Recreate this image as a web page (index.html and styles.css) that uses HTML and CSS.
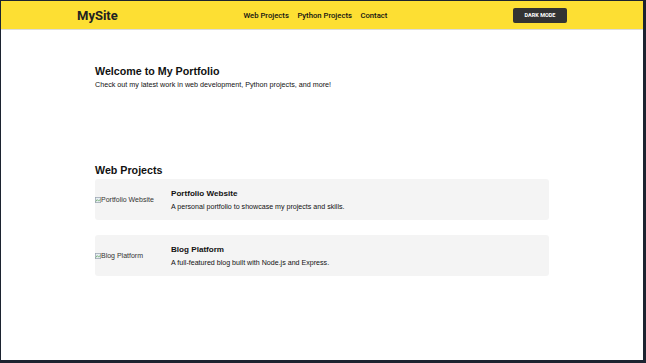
FILE: index.html
```html
<!DOCTYPE html>
<html>
<head>
    <meta charset="utf-8">
    <title>MySite</title>
    <link rel="stylesheet" href="styles.css">
</head>
<body>
<header class="site-header">
    <div class="logo">MySite</div>
    <nav class="nav">
        <a href="#web">Web Projects</a>
        <a href="#python">Python Projects</a>
        <a href="#contact">Contact</a>
    </nav>
    <button class="mode-btn">DARK MODE</button>
</header>
<main class="content">
    <section class="hero">
        <h1>Welcome to My Portfolio</h1>
        <p>Check out my latest work in web development, Python projects, and more!</p>
    </section>
    <section class="projects" id="web">
        <h2>Web Projects</h2>
        <div class="card">
            <span class="thumb"><svg class="broken" viewBox="0 0 8 8"><rect x="0.5" y="0.5" width="7" height="7" fill="#e8eef4" stroke="#9aa5b1" stroke-width="1"/><path d="M1 6 L3 3.5 L5 5.5 L7 3" fill="none" stroke="#5fa35a" stroke-width="1"/></svg>Portfolio Website</span>
            <div class="card-body">
                <h3>Portfolio Website</h3>
                <p>A personal portfolio to showcase my projects and skills.</p>
            </div>
        </div>
        <div class="card">
            <span class="thumb"><svg class="broken" viewBox="0 0 8 8"><rect x="0.5" y="0.5" width="7" height="7" fill="#e8eef4" stroke="#9aa5b1" stroke-width="1"/><path d="M1 6 L3 3.5 L5 5.5 L7 3" fill="none" stroke="#5fa35a" stroke-width="1"/></svg>Blog Platform</span>
            <div class="card-body">
                <h3>Blog Platform</h3>
                <p>A full-featured blog built with Node.js and Express.</p>
            </div>
        </div>
    </section>
</main>
</body>
</html>
```

FILE: styles.css
```css
html {
    background: #1c2330;
}
body {
    margin: 1px 3px 3px 1px;
    min-height: calc(100vh - 4px);
    background: #ffffff;
    font-family: "Liberation Sans", Arial, sans-serif;
    color: #111111;
}
.site-header {
    height: 28px;
    padding: 0 76px;
    display: flex;
    align-items: center;
    justify-content: space-between;
    background: #fddf33;
    border-bottom: 1px solid #dcdcdc;
    font-family: Roboto, "Liberation Sans", sans-serif;
}
.logo {
    font-size: 13px;
    font-weight: bold;
    color: #222222;
}
.nav {
    display: flex;
    gap: 8.5px;
}
.nav a {
    font-size: 7.7px;
    font-weight: 500;
    color: #111111;
    text-decoration: none;
}
.mode-btn {
    width: 54px;
    height: 15px;
    padding: 0;
    border: 0;
    border-radius: 2px;
    background: #333333;
    color: #ffffff;
    font-family: Roboto, "Liberation Sans", sans-serif;
    font-size: 5.5px;
    font-weight: bold;
}
.content {
    max-width: 454px;
    margin: 0 auto;
    padding: 34px 0 30px;
}
.hero h1 {
    margin: 0;
    font-size: 10.7px;
    line-height: 14px;
}
.hero p {
    margin: 2px 0 0;
    font-size: 7.2px;
    line-height: 10px;
}
.projects {
    margin-top: 73px;
}
.projects h2 {
    margin: 0 0 2px;
    font-size: 10.7px;
    line-height: 14px;
}
.card {
    display: flex;
    align-items: center;
    gap: 8px;
    height: 41px;
    margin-bottom: 15px;
    background: #f4f4f4;
    border-radius: 3px;
}
.thumb {
    width: 68px;
    display: flex;
    align-items: center;
    font-size: 7px;
    color: #333333;
    white-space: nowrap;
}
.broken {
    width: 6px;
    height: 6px;
}
.card-body h3 {
    margin: 0;
    font-size: 8.1px;
    line-height: 12px;
}
.card-body p {
    margin: 2px 0 0;
    font-size: 7.1px;
    line-height: 10px;
}
```
